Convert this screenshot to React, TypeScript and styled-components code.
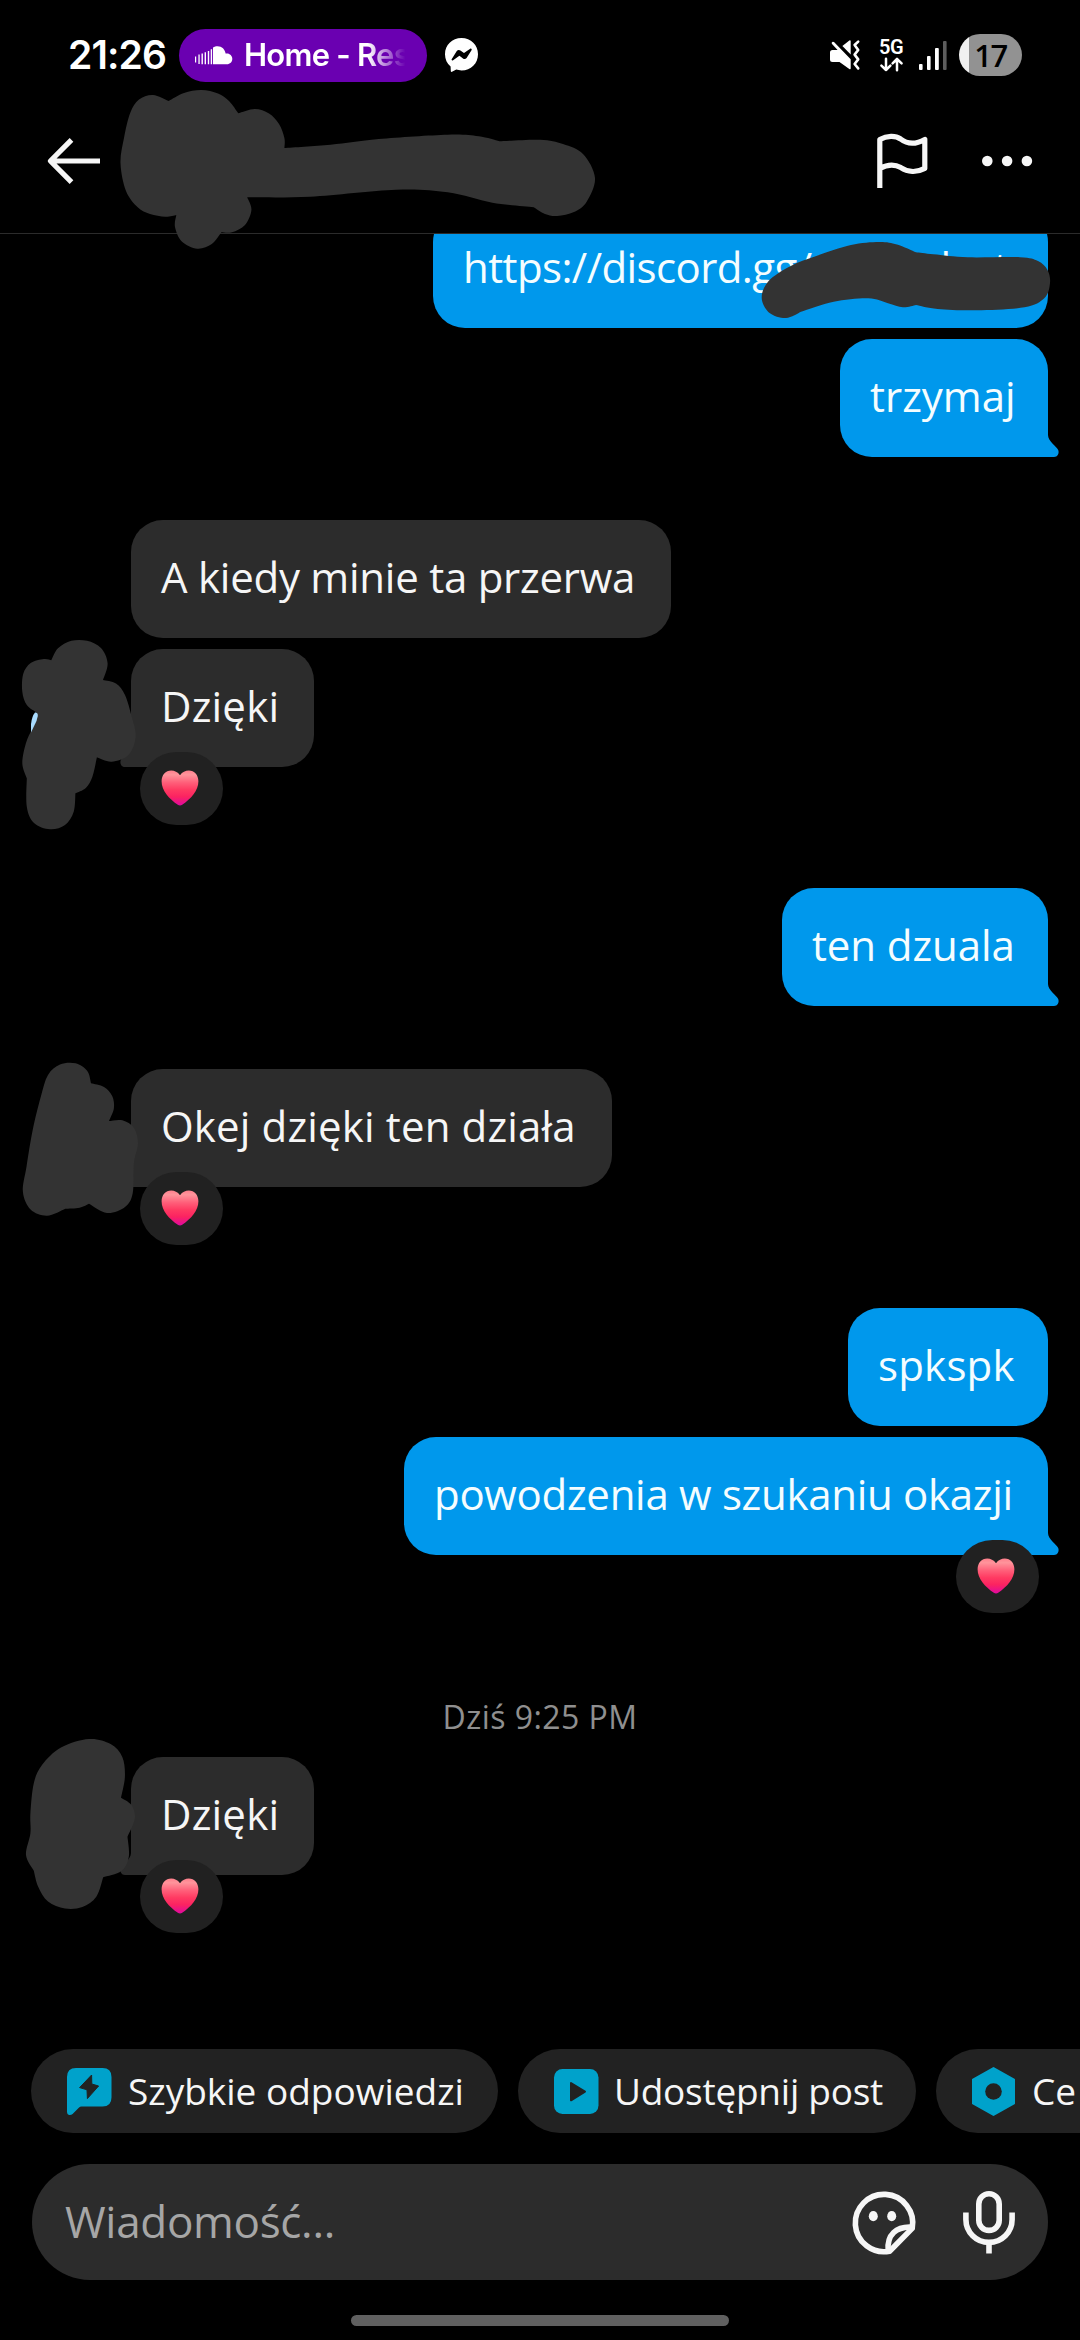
import React from "react";
import styled, { createGlobalStyle, css } from "styled-components";

const GlobalStyle = createGlobalStyle`
  * { box-sizing: border-box; }
  body { margin: 0; background: #000; }
  svg { display: block; flex: none; overflow: visible; }
`;

const Screen = styled.main`
  position: relative;
  display: flex;
  flex-direction: column;
  width: 1080px;
  height: 2340px;
  overflow: hidden;
  background: #000;
  color: #f6f6f6;
  font-family: "Open Sans", "Noto Sans", sans-serif;
`;

/* ---------- status bar ---------- */

const StatusBar = styled.header`
  display: flex;
  align-items: center;
  height: 110px;
  padding: 0 58px 0 68px;
  flex: none;
`;

const Clock = styled.time`
  width: 111px;
  font: 600 39px/54px Inter, Roboto, sans-serif;
  letter-spacing: -0.9px;
  color: #fff;
  white-space: nowrap;
`;

const MediaPill = styled.div`
  display: flex;
  align-items: center;
  gap: 12px;
  width: 248px;
  height: 53px;
  padding: 0 20px 0 16px;
  border-radius: 27px;
  background: #6a00b1;
`;

const MediaTitle = styled.span`
  width: 164px;
  overflow: hidden;
  white-space: nowrap;
  font: 600 31px/44px Inter, Roboto, sans-serif;
  letter-spacing: -0.75px;
  color: #fff;
  mask-image: linear-gradient(90deg, #000 76%, transparent 99%);
`;

const MessengerSlot = styled.span`
  margin-left: 18px;
`;

const StatusIcons = styled.div`
  display: flex;
  align-items: center;
  margin-left: auto;
`;

const Network = styled.div`
  display: flex;
  flex-direction: column;
  align-items: center;
  gap: 4px;
  width: 24px;
  margin: 0 16px 0 19px;
  font: 600 20px/14px Roboto, sans-serif;
  letter-spacing: -0.4px;
  color: #fff;
`;

const Battery = styled.div`
  display: flex;
  align-items: center;
  justify-content: center;
  width: 63px;
  height: 42px;
  margin-left: 12px;
  border-radius: 21px;
  background: linear-gradient(90deg, #f0f0f0 10px, #929292 10px);
  font: 640 31px/42px "Open Sans", sans-serif;
  letter-spacing: -1.5px;
  color: #000;
`;

/* ---------- chat header ---------- */

const ChatHeader = styled.nav`
  display: flex;
  align-items: center;
  height: 124px;
  padding: 0 48px 21px 47px;
  border-bottom: 1px solid #2b2b2b;
  flex: none;
`;

const HeaderActions = styled.div`
  display: flex;
  align-items: center;
  gap: 54px;
  margin-left: auto;
`;

/* ---------- conversation ---------- */

const Conversation = styled.section`
  display: flex;
  flex-direction: column;
  height: 1815px;
  padding: 0 32px 0 131px;
  overflow: hidden;
  flex: none;
`;

const Group = styled.div<{ $mine?: boolean; $top: number }>`
  display: flex;
  flex-direction: column;
  gap: 11px;
  align-items: ${p => (p.$mine ? "flex-end" : "flex-start")};
  margin-top: ${p => p.$top}px;
`;

const Bubble = styled.div<{ $mine?: boolean; $tail?: boolean; $width: number; $tracking: number }>`
  position: relative;
  width: ${p => p.$width}px;
  height: 118px;
  padding: 0 0 6px 30px;
  border-radius: 32px;
  background: ${p => (p.$mine ? "#0098ec" : "#2c2c2c")};
  color: ${p => (p.$mine ? "#f4fdff" : "#f6f6f6")};
  font-size: 42px;
  font-weight: 450;
  line-height: 113px;
  letter-spacing: ${p => p.$tracking}px;
  white-space: pre;
  ${p => p.$tail && (p.$mine
    ? css`border-bottom-right-radius: 0;`
    : css`border-bottom-left-radius: 0;`)}
`;

const TailSlot = styled.span<{ $mine?: boolean }>`
  position: absolute;
  bottom: 0;
  ${p => (p.$mine ? "right: -11px;" : "left: -11px; transform: scaleX(-1);")}
`;

const LinkGap = styled.span<{ $width: number }>`
  display: inline-block;
  width: ${p => p.$width}px;
`;

const Reaction = styled.div<{ $mine?: boolean }>`
  position: absolute;
  top: 103px;
  ${p => (p.$mine ? "right: 9px;" : "left: 9px;")}
  display: flex;
  justify-content: center;
  width: 83px;
  height: 73px;
  padding: 18px 3px 0 0;
  border-radius: 37px;
  background: #212121;
`;

const DayStamp = styled.time`
  margin: 140px 0 0 -99px;
  font-size: 32px;
  line-height: 44px;
  letter-spacing: 0.45px;
  text-align: center;
  color: #8f8f8f;
`;

/* ---------- composer ---------- */

const QuickActions = styled.div`
  display: flex;
  gap: 20px;
  height: 84px;
  padding-left: 31px;
  flex: none;
`;

const Chip = styled.button<{ $width: number; $gap: number; $tracking: number }>`
  display: flex;
  align-items: center;
  gap: ${p => p.$gap}px;
  width: ${p => p.$width}px;
  height: 84px;
  flex: none;
  padding: 0 0 0 36px;
  border: 0;
  border-radius: 42px;
  background: #222;
  color: #f6f6f6;
  font: 440 37px/83px "Open Sans", sans-serif;
  letter-spacing: ${p => p.$tracking}px;
  white-space: nowrap;
`;

const ChipLabel = styled.span`
  height: 84px;
`;

const Composer = styled.div`
  display: flex;
  align-items: center;
  height: 116px;
  margin: 31px 32px 0;
  padding: 0 33px 0 33px;
  border-radius: 58px;
  background: #2c2c2c;
  flex: none;
`;

const Placeholder = styled.span`
  flex: 1;
  height: 116px;
  font-size: 44px;
  line-height: 114px;
  letter-spacing: -0.3px;
  color: #a6a6a6;
`;

const MicSlot = styled.span`
  margin-left: 48px;
`;

const HomeIndicator = styled.div`
  width: 378px;
  height: 11px;
  margin: 35px auto 0;
  border-radius: 6px;
  background: #606060;
  flex: none;
`;

const Overlay = styled.svg`
  position: absolute;
  inset: 0;
  pointer-events: none;
`;

/* ---------- drawings ---------- */

const Tail = ({ mine }: { mine?: boolean }) => (
  <TailSlot $mine={mine}>
    <svg width="12" height="22" viewBox="0 0 12 22" fill={mine ? "#0098ec" : "#2c2c2c"}>
      <path d="M0 0H1C1 6.5 9.5 11 11.2 15C12.5 18.5 10.5 22 7 22H0Z" />
    </svg>
  </TailSlot>
);

const Heart = ({ mine }: { mine?: boolean }) => (
  <Reaction $mine={mine}>
    <svg width="38" height="36" viewBox="0 0 38 36">
      <defs>
        <linearGradient id="heart" x1="0" y1="0" x2="0" y2="1">
          <stop offset="0" stopColor="#ff7f8c" />
          <stop offset="0.12" stopColor="#ff949b" />
          <stop offset="0.35" stopColor="#ff5e79" />
          <stop offset="0.55" stopColor="#ff3a62" />
          <stop offset="0.75" stopColor="#fb2361" />
          <stop offset="1" stopColor="#e009a0" />
        </linearGradient>
      </defs>
      <path fill="url(#heart)" d="M19 5.2C16.7 2 13.6.5 10.2.5C4.6.5.6 5 .6 11.2C.6 20.6 8 28.6 16.8 34.8C18.2 35.7 19.8 35.7 21.2 34.8C30 28.6 37.4 20.6 37.4 11.2C37.4 5 33.4.5 27.8.5C24.4.5 21.3 2 19 5.2Z" />
    </svg>
  </Reaction>
);

const SoundWave = () => (
  <svg width="37" height="19" viewBox="0 0 37 19" fill="#fff">
    <path d="M0 10.5h1.2v6H0zM3.4 8.5h1.3v9.6H3.4zM6.5 7.6h1.4v10.7H6.5zM9.6 6.2H11v12.1H9.6zM12.8 5h1.4v13.3h-1.4zM15.7 3.3h1.4v15h-1.4z" />
    <path d="M18 1.6C19.4.6 21 .3 22.5.3C27 .3 30 3.5 30.6 7.6C34 6.6 37.3 9.3 37.3 12.8C37.3 16 35 18.3 31.8 18.3H18Z" />
  </svg>
);

const Messenger = () => (
  <svg width="33" height="34" viewBox="0 0 33 34">
    <path fill="#fff" d="M16.5 0C26 0 33 7 33 16.2C33 25.4 26 32.4 16.5 32.4C14.5 32.4 12.8 32.1 11.3 31.6L7 33.8C6.3 34.1 5.8 33.8 5.8 33L5.6 28.5C2 25.5 0 21.2 0 16.2C0 7 7 0 16.5 0Z" />
    <path fill="#000" d="M6.8 20.9L11.8 13C12.6 11.8 14.2 11.5 15.4 12.4L19 15.1L25.2 10.8C26.2 10.2 27.2 11.2 26.5 12.2L21.6 19.9C20.8 21.1 19.2 21.4 18 20.5L14.4 17.8L8.1 22.2C7.1 22.8 6.1 21.9 6.8 20.9Z" />
  </svg>
);

const Muted = () => (
  <svg width="30" height="30" viewBox="0 0 30 30">
    <g fill="#fff">
      <path d="M0 12.5Q0 10 2.5 10H7.6L1.8 3.8Q1.2 2.2 2.8 1.8L4 2L20.7 19.3V28.3Q20.7 29.8 19.3 29L9.5 22H2.5Q0 22 0 19.5Z" />
      <path d="M12.4 6L19.3.4Q20.7-.3 20.7 1.5V14.6Z" />
    </g>
    <path d="M28.2 1.6L24.6 5L28.2 10L24.6 14.6L28.2 19.4L24.6 24L28.2 28.4" fill="none" stroke="#fff" strokeWidth="2.6" strokeLinecap="round" strokeLinejoin="round" />
  </svg>
);

const DataArrows = () => (
  <svg width="23" height="13" viewBox="0 0 23 13" fill="none" stroke="#fff" strokeWidth="2.5" strokeLinecap="round" strokeLinejoin="round">
    <path d="M6 .8V12M1.4 7.6L6 12L10.4 7.6M17 12.2V1M12.6 5.4L17 1L21.6 5.4" />
  </svg>
);

const Signal = () => (
  <svg width="28" height="29" viewBox="0 0 28 29">
    <g fill="#fff">
      <rect y="23" width="3.6" height="6" rx="1" />
      <rect x="8" y="15" width="3.6" height="14" rx="1" />
      <rect x="16" y="7" width="3.8" height="22" rx="1" />
    </g>
    <rect x="24" width="3.6" height="29" rx="1" fill="#5d5d5d" />
  </svg>
);

const BackArrow = () => (
  <svg width="53" height="46" viewBox="0 0 53 46" fill="none" stroke="#f6f6f6" strokeWidth="5.2">
    <path d="M53 23H4M24.5 1.8L3.4 23L24.5 44.2" strokeLinejoin="round" />
  </svg>
);

const Flag = () => (
  <svg width="51" height="54" viewBox="0 0 51 54" fill="none" stroke="#f6f6f6" strokeWidth="5.2" strokeLinejoin="round">
    <path d="M2.8 54V5.6C10 1.6 18.4 1.4 23.6 5C30 10 38.6 10.6 47.8 5.4V34.4C39.6 38.8 30.6 38.2 23.8 33.6C18 30.2 10 30.6 2.8 34.4" />
  </svg>
);

const More = () => (
  <svg width="50" height="12" viewBox="0 0 50 12" fill="#f6f6f6">
    <circle cx="5.3" cy="6" r="5.3" /><circle cx="25.1" cy="6" r="5.3" /><circle cx="44.9" cy="6" r="5.3" />
  </svg>
);

const ReplyIcon = () => (
  <svg width="45" height="47" viewBox="0 0 45 47">
    <path fill="#00a2cb" d="M9 0H35.5Q44.5 0 44.5 9V29.5Q44.5 38.5 35.5 38.5H14.5Q13 38.5 11.8 39.7L5.6 46Q4 47.4 2 47Q0 46.4 0 44V9Q0 0 9 0Z" />
    <path fill="#222" stroke="#222" strokeWidth="1" strokeLinejoin="round" d="M24.6 7L12.6 19.6L20 21.8L20.4 30.6L31.6 18L24.8 16Z" />
  </svg>
);

const PostIcon = () => (
  <svg width="45" height="45" viewBox="0 0 45 45">
    <rect width="44.5" height="45" rx="8.5" fill="#00a2cb" />
    <path fill="#222" stroke="#222" strokeWidth="2" strokeLinejoin="round" d="M17 14L31 22.6L17 31.3Z" />
  </svg>
);

const HexIcon = () => (
  <svg width="43" height="49" viewBox="0 0 43 49">
    <path fill="#00a2cb" stroke="#00a2cb" strokeWidth="2" strokeLinejoin="round" d="M21.5 1L42 12.6V36.4L21.5 48L1 36.4V12.6Z" />
    <circle cx="21.5" cy="24.5" r="8.3" fill="#222" />
  </svg>
);

const Sticker = () => (
  <svg width="63" height="63" viewBox="0 0 63 63">
    <g fill="none" stroke="#f6f6f6" strokeWidth="5.6" strokeLinejoin="round">
      <path d="M60.2 37.4A28.7 28.7 0 1 0 37.6 60.2Z" />
      <path d="M60 36.2C44.5 35.2 34.6 43.5 36.2 60" />
    </g>
    <g fill="#f6f6f6">
      <ellipse cx="21.3" cy="25.2" rx="4.5" ry="5.1" />
      <ellipse cx="39.7" cy="25.2" rx="4.5" ry="5.1" />
    </g>
  </svg>
);

const Mic = () => (
  <svg width="52" height="63" viewBox="0 0 52 63" fill="none" stroke="#f6f6f6" strokeWidth="5.6">
    <rect x="15.8" y="2.8" width="20.4" height="36.6" rx="10.2" />
    <path d="M2.9 21.5V28.4A23.1 23 0 0 0 49.1 28.4V21.5M26 51V62.5" />
  </svg>
);

/* Each scribble is a closed outline made of smooth strokes that meet at sharp corners. */
type Point = [number, number];
type Outline = Point[][];

const smooth = (pts: Point[]) =>
  pts.slice(0, -1).map((p, i) => {
    const a = pts[i - 1] ?? p;
    const n = pts[i + 1];
    const b = pts[i + 2] ?? n;
    return `C${p[0] + (n[0] - a[0]) / 6} ${p[1] + (n[1] - a[1]) / 6} ${n[0] - (b[0] - p[0]) / 6} ${n[1] - (b[1] - p[1]) / 6} ${n[0]} ${n[1]}`;
  }).join("");

const toPath = (outline: Outline) =>
  outline.map((pts, i) => {
    const next = outline[(i + 1) % outline.length][0];
    return (i === 0 ? `M${pts[0][0]} ${pts[0][1]}` : "") + smooth([...pts, next]);
  }).join("") + "Z";

const scribbles: Outline[] = [
  [
    [[168.7, 101], [184, 93], [201.4, 90], [218, 93.5], [229, 101]],
    [[238.3, 113.3], [254.8, 109], [269, 113.5], [279, 124], [284.4, 138]],
    [[284.4, 148], [330.6, 144.7], [378.8, 139], [447.7, 134.7], [478.7, 136.3]],
    [[499.3, 141.3], [540, 139.7], [563, 144], [583, 154], [595, 178], [586.5, 202], [574, 212], [557.2, 216], [545, 214]],
    [[533.7, 207.3], [492.4, 202.7], [447.7, 192.3], [396, 189.7], [310, 196.7]],
    [[247.2, 197.3], [251.4, 210], [245, 225], [232, 232.3]],
    [[221.4, 232.3], [211.8, 244], [197.3, 248.7], [181.8, 241.5], [175, 227]],
    [[176.3, 215], [165.3, 216.7], [150, 214], [137.7, 207.3], [126, 191], [120.5, 163.3], [124, 138], [130.2, 113], [139, 99.5], [153, 95]],
  ],
  [
    [[916, 252.3], [933.4, 254.3], [968, 257.3], [1020, 257.2], [1038, 261], [1047.5, 270], [1050, 283], [1044.5, 298], [1024.5, 307.3], [976.8, 310.3], [937.7, 309]],
    [[916, 305], [903, 307.3], [888, 303.3], [868.3, 298.3], [833.7, 301.7]],
    [[801, 311.7], [786, 318], [769.6, 313], [761.7, 298], [768.6, 281], [790.3, 266.2], [816.3, 256], [851, 245], [879.2, 242], [897, 244.5]],
  ],
  [
    [[51.3, 660.3], [58, 648.3], [71.4, 640.8], [87, 640.8], [101, 648], [107.6, 663.3]],
    [[103, 680], [116, 683.5], [125, 695], [131.7, 716.7], [135.7, 736.7], [128.5, 755], [111.6, 761.7]],
    [[96.9, 757.3], [92.4, 776.7], [85.8, 788]],
    [[75.4, 793.3], [73.7, 811.7], [65, 825], [50, 829.3], [34, 823], [26.8, 806.7]],
    [[26.8, 778.3], [22.3, 763.3], [25.9, 743.3], [32, 729], [36.5, 718]],
    [[37, 712.7], [26.8, 705], [22.3, 691.7], [23.2, 674], [30.7, 663], [43.8, 659]],
  ],
  [
    [[91, 1083.3], [104, 1087], [112.2, 1096], [113.9, 1108.3]],
    [[109, 1121], [122.4, 1120.3], [134, 1128], [138, 1143.3], [133.9, 1163.3], [132.7, 1193.3], [125, 1207], [107, 1213]],
    [[89, 1203.7], [79.6, 1207.7]],
    [[65.3, 1208.7], [47, 1215.7], [30.6, 1209.5], [22.9, 1191.7], [26.5, 1166.7], [32.7, 1130], [40.8, 1096.7], [48, 1075], [60, 1064.5], [75.5, 1063.3], [87.3, 1071]],
  ],
  [
    [[121, 1797.7], [131.4, 1805], [134.9, 1818.3]],
    [[127.5, 1836.7], [128.8, 1856.7], [121.4, 1871]],
    [[103.2, 1877.3], [96.3, 1896.7], [82.4, 1907], [65, 1908.5], [48, 1901.5], [38.2, 1886.7]],
    [[33.8, 1870.7], [26, 1855], [30.4, 1833.3], [30.4, 1813.3], [33.8, 1783.3], [42, 1765], [61, 1747.5], [89, 1739], [110.6, 1744], [122.3, 1757], [124.9, 1776.7]],
  ],
];

const Scribbles = () => (
  <Overlay width="1080" height="2340" viewBox="0 0 1080 2340">
    {scribbles.map((s, i) => <path key={i} d={toPath(s)} fill="#333" />)}
    <path d="M35 712.5Q38 712 37.8 716L36.5 721L31 732.5V724Q32 716 35 712.5Z" fill="#a9dcff" />
  </Overlay>
);

export default function App() {
  return (
    <Screen>
      <GlobalStyle />
      <StatusBar>
        <Clock>21:26</Clock>
        <MediaPill>
          <SoundWave />
          <MediaTitle>Home - Res</MediaTitle>
        </MediaPill>
        <MessengerSlot><Messenger /></MessengerSlot>
        <StatusIcons>
          <Muted />
          <Network>5G<DataArrows /></Network>
          <Signal />
          <Battery>17</Battery>
        </StatusIcons>
      </StatusBar>

      <ChatHeader>
        <BackArrow />
        <HeaderActions><Flag /><More /></HeaderActions>
      </ChatHeader>

      <Conversation>
        <Group $mine $top={-24}>
          <Bubble $mine $width={615} $tracking={-0.6}>
            https://discord.gg/<LinkGap $width={129} />h<LinkGap $width={28} />t
          </Bubble>
          <Bubble $mine $tail $width={208} $tracking={0}>trzymaj<Tail mine /></Bubble>
        </Group>
        <Group $top={63}>
          <Bubble $width={540} $tracking={-0.25}>A kiedy minie ta przerwa</Bubble>
          <Bubble $tail $width={183} $tracking={0.2}>Dzięki<Tail /><Heart /></Bubble>
        </Group>
        <Group $mine $top={121}>
          <Bubble $mine $tail $width={266} $tracking={-0.1}>ten dzuala<Tail mine /></Bubble>
        </Group>
        <Group $top={63}>
          <Bubble $tail $width={481} $tracking={0.15}>Okej dzięki ten działa<Tail /><Heart /></Bubble>
        </Group>
        <Group $mine $top={121}>
          <Bubble $mine $width={200} $tracking={0.2}>spkspk</Bubble>
          <Bubble $mine $tail $width={644} $tracking={-0.3}>powodzenia w szukaniu okazji<Tail mine /><Heart mine /></Bubble>
        </Group>
        <DayStamp>Dziś 9:25 PM</DayStamp>
        <Group $top={18}>
          <Bubble $tail $width={183} $tracking={0.2}>Dzięki<Tail /><Heart /></Bubble>
        </Group>
      </Conversation>

      <QuickActions>
        <Chip $width={467} $gap={16} $tracking={0}><ReplyIcon /><ChipLabel>Szybkie odpowiedzi</ChipLabel></Chip>
        <Chip $width={398} $gap={15} $tracking={-0.25}><PostIcon /><ChipLabel>Udostępnij post</ChipLabel></Chip>
        <Chip $width={240} $gap={17} $tracking={0}><HexIcon /><ChipLabel>Ce</ChipLabel></Chip>
      </QuickActions>

      <Composer>
        <Placeholder>Wiadomość...</Placeholder>
        <Sticker />
        <MicSlot><Mic /></MicSlot>
      </Composer>
      <HomeIndicator />
      <Scribbles />
    </Screen>
  );
}
